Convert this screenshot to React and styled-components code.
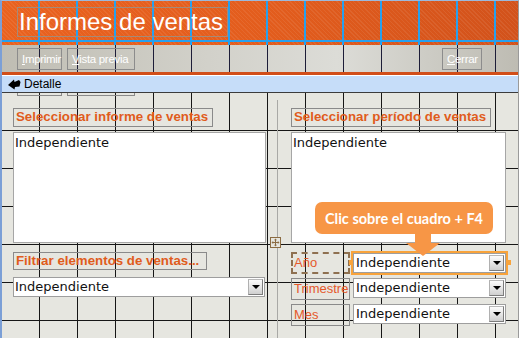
import React from "react";
import styled, { createGlobalStyle } from "styled-components";

const GlobalStyle = createGlobalStyle`
  html, body {
    margin: 0;
    padding: 0;
    background: #ffffff;
  }
  body {
    font-family: "Liberation Sans", Arial, sans-serif;
  }
`;

const vLines = (color, w = 1) =>
  `repeating-linear-gradient(90deg, transparent 0 ${38 - w}px, ${color} ${38 - w}px 38px)`;
const hLines = (color) =>
  `repeating-linear-gradient(180deg, transparent 0 37px, ${color} 37px 38px)`;

const Frame = styled.div`
  position: relative;
  width: 519px;
  height: 338px;
  box-sizing: border-box;
  border-top: 1px solid #9cb9dc;
  border-left: 2px solid #7b9fd6;
  border-right: 1px solid #9a9a9a;
  display: flex;
  flex-direction: column;
  overflow: hidden;
`;

const Header = styled.header`
  height: 44px;
  flex-shrink: 0;
  box-sizing: border-box;
  padding: 6px 0 0 15px;
  background-color: #e05a1d;
  background-image: ${vLines("#27a0ee", 2)}, linear-gradient(180deg, transparent 39px, #27a0ee 39px, #27a0ee 41px, transparent 41px), repeating-linear-gradient(45deg, rgba(255, 255, 255, 0.07) 0px, rgba(255, 255, 255, 0.07) 1px, transparent 1px, transparent 3px), linear-gradient(90deg, #e9621f 0%, #e35d1d 50%, #d2521b 100%);
`;

const TitleBox = styled.div`
  width: 211px;
  height: 30px;
  box-sizing: border-box;
  border: 1px solid #a58a78;
  color: #ffffff;
  font-size: 24px;
  line-height: 27px;
  padding-left: 1px;
  white-space: nowrap;
`;

const Toolbar = styled.nav`
  height: 27px;
  flex-shrink: 0;
  box-sizing: border-box;
  display: flex;
  align-items: flex-start;
  gap: 5px;
  padding: 3px 36px 0 15px;
  background-color: #cbc9c0;
  background-image: ${vLines("#1d1d38")},
    linear-gradient(90deg, #bfbdb3 0%, #d2d1ca 40%, #dcdcd7 65%, #bebcb3 100%);
`;

const ToolButton = styled.div`
  width: ${(p) => p.$w}px;
  height: 22px;
  box-sizing: border-box;
  border: 1px solid #8c8c8c;
  color: #ffffff;
  font-size: 11.5px;
  letter-spacing: -0.3px;
  line-height: 20px;
  padding-left: 4px;
  white-space: nowrap;
  margin-left: ${(p) => (p.$push ? "auto" : "0")};
`;

const OrangeRule = styled.div`
  height: 3px;
  flex-shrink: 0;
  background: #d24e19;
  border-bottom: 1px solid #ffffff;
`;

const SectionBar = styled.div`
  height: 17px;
  flex-shrink: 0;
  box-sizing: border-box;
  display: flex;
  align-items: center;
  gap: 3px;
  padding-left: 6px;
  background: #c6ddf9;
  border-bottom: 1px solid #3c3c3c;
  font-size: 12px;
  color: #000;
`;

const Body = styled.main`
  flex: 1;
  display: flex;
  flex-direction: column;
  background-color: #e6e6e0;
  background-image: ${vLines("#161616")}, ${hLines("#161616")};
`;

const GhostRow = styled.div`
  display: flex;
  gap: 5px;
  padding-left: 15px;
  height: 3px;
`;

const Ghost = styled.div`
  width: ${(p) => p.$w}px;
  box-sizing: border-box;
  border: 1px solid #8a8a8a;
  border-top: none;
`;

const Columns = styled.div`
  flex: 1;
  display: grid;
  grid-template-columns: 253px 25px 215px;
  padding-left: 11px;
  margin-top: 12px;
`;

const Column = styled.section`
  position: relative;
  display: flex;
  flex-direction: column;
  align-items: flex-start;
`;

const DividerCell = styled.div`
  position: relative;
`;

const Divider = styled.div`
  position: absolute;
  left: 11px;
  top: -8px;
  bottom: 0;
  width: 1px;
  background: #a9a9a6;
`;

const MoveHandle = styled.div`
  position: absolute;
  left: 4px;
  top: 129px;
  width: 11px;
  height: 11px;
  box-sizing: border-box;
  border: 1px solid #8b6b42;
  background: #e6e6e0;
  display: flex;
  align-items: center;
  justify-content: center;
`;

const HeadLabel = styled.div`
  width: ${(p) => p.$w}px;
  height: ${(p) => p.$h}px;
  box-sizing: border-box;
  border: 1px solid #8a8a8a;
  color: #e05c1c;
  font-weight: bold;
  font-size: 13.3px;
  line-height: ${(p) => p.$h - 3}px;
  padding-left: 2px;
  white-space: nowrap;
  margin-top: ${(p) => p.$mt || 0}px;
`;

const ListBox = styled.div`
  width: ${(p) => p.$w}px;
  height: 111px;
  box-sizing: border-box;
  margin-top: 5px;
  background: #ffffff;
  border: 1px solid #a6a6a6;
  padding: 1px 1px;
  font-family: "DejaVu Sans", Verdana, sans-serif;
  font-size: 13px;
  line-height: 17px;
  color: #111;
`;

const Combo = styled.div`
  position: relative;
  width: ${(p) => p.$w}px;
  height: 20px;
  box-sizing: border-box;
  margin-top: ${(p) => p.$mt || 0}px;
  display: flex;
  align-items: center;
  background: #ffffff;
  border: 1px solid #9e9e9e;
  outline: ${(p) => (p.$selected ? "2px solid #f8a33b" : "none")};
  font-family: "DejaVu Sans", Verdana, sans-serif;
  font-size: 13px;
  color: #111;

  &::before,
  &::after {
    content: "";
    display: ${(p) => (p.$selected ? "block" : "none")};
    position: absolute;
    top: 6px;
    width: 3px;
    height: 5px;
    background: #f8a33b;
  }
  &::before {
    left: -5px;
  }
  &::after {
    right: -6px;
  }
`;

const ComboText = styled.span`
  flex: 1;
  padding-left: ${(p) => p.$pad || 1}px;
  line-height: 18px;
  white-space: nowrap;
`;

const DropButton = styled.div`
  width: 15px;
  height: 16px;
  margin-right: 1px;
  box-sizing: border-box;
  border: 1px solid #7c7c7c;
  border-top-color: #b8b8b8;
  border-left-color: #b0b0b0;
  background: linear-gradient(180deg, #fbfbfb 0%, #e6e6e6 50%, #cfcfcf 100%);
  display: flex;
  align-items: center;
  justify-content: center;

  &::after {
    content: "";
    margin-top: -1px;
    border-left: 4px solid transparent;
    border-right: 4px solid transparent;
    border-top: 4px solid #000;
  }
`;

const FieldRows = styled.div`
  display: flex;
  flex-direction: column;
  gap: 4px;
  margin-top: 9px;
`;

const FieldRow = styled.div`
  display: flex;
  align-items: flex-start;
  gap: 3px;
`;

const SmallLabel = styled.div`
  width: 59px;
  height: 22px;
  box-sizing: border-box;
  border: ${(p) => (p.$selected ? "2px dashed #8e7050" : "1px solid #8a8a8a")};
  color: #e5582a;
  font-size: 13px;
  line-height: 15px;
  padding: ${(p) => (p.$selected ? "1px 0 0 1px" : "2px 0 0 2px")};
  white-space: nowrap;
  overflow: hidden;
`;

const Callout = styled.div`
  position: absolute;
  left: 24px;
  top: 94px;
  width: 178px;
  height: 32px;
  border-radius: 7px;
  background: #f79646;
  color: #ffffff;
  font-family: Lato, "Open Sans", sans-serif;
  font-weight: bold;
  font-size: 14.5px;
  display: flex;
  align-items: center;
  justify-content: center;
  z-index: 2;

  &::before {
    content: "";
    position: absolute;
    left: 100px;
    top: 100%;
    width: 16px;
    height: 10px;
    background: #f79646;
  }
  &::after {
    content: "";
    position: absolute;
    left: 91px;
    top: calc(100% + 9px);
    border-left: 17px solid transparent;
    border-right: 17px solid transparent;
    border-top: 13px solid #f79646;
  }
`;

function SectionIcon() {
  return (
    <svg width="13" height="11" viewBox="0 0 13 11">
      <path d="M0 6 L6 0.5 L6.5 3 L11 1 L12.5 3 L11.5 7.5 L7 8 L6.5 10.5 Z" fill="#000" />
    </svg>
  );
}

function MoveIcon() {
  return (
    <svg width="9" height="9" viewBox="0 0 9 9">
      <path
        d="M4.5 0.5 L6 2.2 H5 V4 H6.8 V3 L8.5 4.5 L6.8 6 V5 H5 V6.8 H6 L4.5 8.5 L3 6.8 H4 V5 H2.2 V6 L0.5 4.5 L2.2 3 V4 H4 V2.2 H3 Z"
        fill="#8b6b42"
      />
    </svg>
  );
}

function ComboBox({ width, selected, pad, mt }) {
  return (
    <Combo $w={width} $selected={selected} $mt={mt}>
      <ComboText $pad={pad}>Independiente</ComboText>
      <DropButton />
    </Combo>
  );
}

const periodFields = [
  { label: "Año", selected: true },
  { label: "Trimestre" },
  { label: "Mes" },
];

export default function App() {
  return (
    <>
      <GlobalStyle />
      <Frame>
        <Header>
          <TitleBox>Informes de ventas</TitleBox>
        </Header>
        <Toolbar>
          <ToolButton $w={45}>
            <u>I</u>mprimir
          </ToolButton>
          <ToolButton $w={68}>
            <u>V</u>ista previa
          </ToolButton>
          <ToolButton $w={40} $push>
            <u>C</u>errar
          </ToolButton>
        </Toolbar>
        <OrangeRule />
        <SectionBar>
          <SectionIcon />
          Detalle
        </SectionBar>
        <Body>
          <GhostRow>
            <Ghost $w={45} />
            <Ghost $w={68} />
          </GhostRow>
          <Columns>
            <Column>
              <HeadLabel $w={200} $h={19}>
                Seleccionar informe de ventas
              </HeadLabel>
              <ListBox $w={253}>Independiente</ListBox>
              <HeadLabel $w={194} $h={18} $mt={9}>
                Filtrar elementos de ventas...
              </HeadLabel>
              <ComboBox width={252} mt={7} />
            </Column>
            <DividerCell>
              <Divider />
              <MoveHandle>
                <MoveIcon />
              </MoveHandle>
            </DividerCell>
            <Column>
              <HeadLabel $w={200} $h={19}>
                Seleccionar período de ventas
              </HeadLabel>
              <ListBox $w={215}>Independiente</ListBox>
              <FieldRows>
                {periodFields.map((f) => (
                  <FieldRow key={f.label}>
                    <SmallLabel $selected={f.selected}>{f.label}</SmallLabel>
                    <ComboBox width={153} selected={f.selected} pad={2} mt={f.selected ? 1 : 0} />
                  </FieldRow>
                ))}
              </FieldRows>
              <Callout>Clic sobre el cuadro + F4</Callout>
            </Column>
          </Columns>
        </Body>
      </Frame>
    </>
  );
}
